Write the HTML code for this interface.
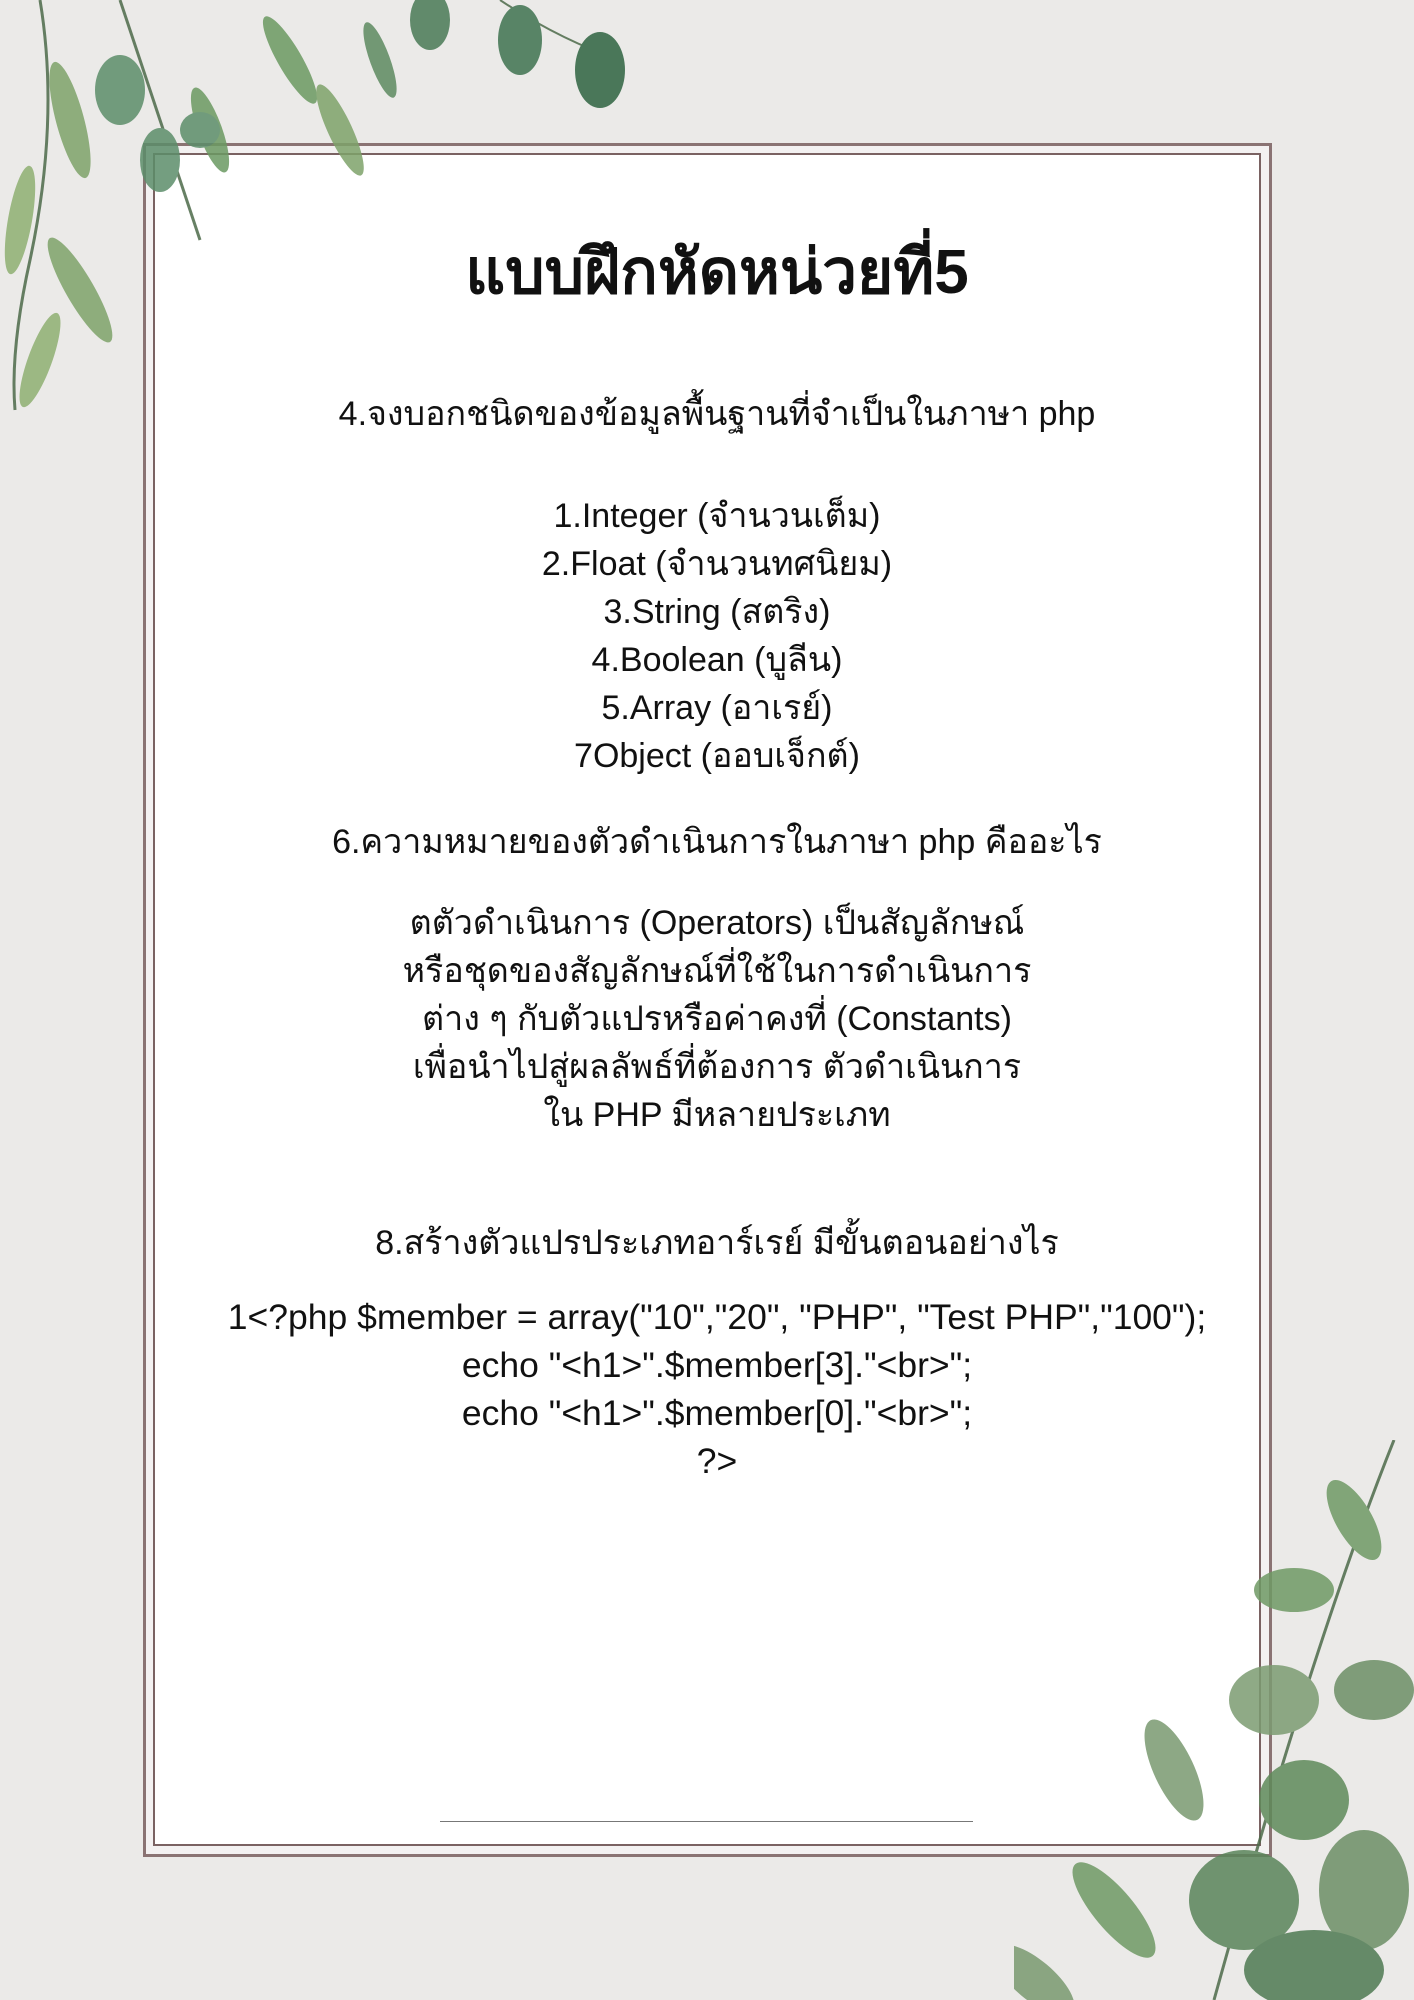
<!DOCTYPE html>
<html><head><meta charset="utf-8"><style>
body{margin:0;width:1414px;height:2000px;background:#ebeae8;position:relative;overflow:hidden;font-family:"Liberation Sans",sans-serif;color:#111}
.frame{position:absolute;left:143px;top:143px;width:1129px;height:1714px;border:3px solid #8a7373;box-sizing:border-box;background:#f3f1f1}
.inner{position:absolute;left:153px;top:153px;width:1108px;height:1693px;border:2px solid #7a6262;box-sizing:border-box;background:#fff}
.t{position:absolute;left:10px;width:1414px;text-align:center;white-space:nowrap}
.l{font-size:34px;line-height:48px}
svg{position:absolute}
</style></head><body>
<div class="frame"></div>
<div class="inner"></div>
<svg width="650" height="430" style="left:0;top:0">
<g fill="#5e8a60" opacity=".85">
<path d="M40 0 Q60 120 30 260 Q10 350 15 410" stroke="#4d6b4a" stroke-width="3" fill="none"/>
<path d="M120 0 Q160 120 200 240" stroke="#4d6b4a" stroke-width="3" fill="none"/>
<path d="M500 0 Q560 40 620 60" stroke="#4d6b4a" stroke-width="2" fill="none"/>
<ellipse cx="70" cy="120" rx="14" ry="60" transform="rotate(-15 70 120)" fill="#7ea36a"/>
<ellipse cx="20" cy="220" rx="12" ry="55" transform="rotate(10 20 220)" fill="#8fb072"/>
<ellipse cx="80" cy="290" rx="14" ry="60" transform="rotate(-30 80 290)" fill="#7ea36a"/>
<ellipse cx="40" cy="360" rx="12" ry="50" transform="rotate(20 40 360)" fill="#8fb072"/>
<ellipse cx="120" cy="90" rx="25" ry="35" fill="#5c8e6a"/>
<ellipse cx="160" cy="160" rx="20" ry="32" fill="#5c8e6a"/>
<ellipse cx="210" cy="130" rx="12" ry="45" transform="rotate(-20 210 130)" fill="#6b9a62"/>
<ellipse cx="290" cy="60" rx="12" ry="50" transform="rotate(-30 290 60)" fill="#6b9a62"/>
<ellipse cx="340" cy="130" rx="12" ry="50" transform="rotate(-25 340 130)" fill="#7ea36a"/>
<ellipse cx="200" cy="130" rx="20" ry="18" fill="#5c8e6a"/>
<ellipse cx="520" cy="40" rx="22" ry="35" fill="#3f7350"/>
<ellipse cx="600" cy="70" rx="25" ry="38" fill="#2f6441"/>
<ellipse cx="430" cy="20" rx="20" ry="30" fill="#4a7a56"/>
<ellipse cx="380" cy="60" rx="10" ry="40" transform="rotate(-20 380 60)" fill="#5e8a60"/>
</g></svg>
<svg width="400" height="560" style="left:1014px;top:1440px">
<g fill="#5f8a5a" opacity=".85">
<path d="M380 0 Q300 200 200 560" stroke="#4d6b4a" stroke-width="3" fill="none"/>
<ellipse cx="340" cy="80" rx="18" ry="45" transform="rotate(-30 340 80)" fill="#6f9a65"/>
<ellipse cx="280" cy="150" rx="40" ry="22" fill="#6f9a65"/>
<ellipse cx="260" cy="260" rx="45" ry="35" fill="#7c9c72"/>
<ellipse cx="360" cy="250" rx="40" ry="30" fill="#6d8f66"/>
<ellipse cx="160" cy="330" rx="20" ry="55" transform="rotate(-25 160 330)" fill="#7a9a70"/>
<ellipse cx="290" cy="360" rx="45" ry="40" fill="#5f8a5a"/>
<ellipse cx="100" cy="470" rx="20" ry="60" transform="rotate(-40 100 470)" fill="#6f9a65"/>
<ellipse cx="230" cy="460" rx="55" ry="50" fill="#5a845a"/>
<ellipse cx="350" cy="450" rx="45" ry="60" fill="#6d8f66"/>
<ellipse cx="20" cy="540" rx="20" ry="50" transform="rotate(-50 20 540)" fill="#7a9a70"/>
<ellipse cx="300" cy="530" rx="70" ry="40" fill="#4e7a52"/>
</g></svg>
<div class="t" style="top:236px;font-size:62px;font-weight:bold;line-height:74px">แบบฝึกหัดหน่วยที่5</div>
<div class="t l" style="top:390px">4.จงบอกชนิดของข้อมูลพื้นฐานที่จำเป็นในภาษา php</div>
<div class="t l" style="top:492px">1.Integer (จำนวนเต็ม)<br>2.Float (จำนวนทศนิยม)<br>3.String (สตริง)<br>4.Boolean (บูลีน)<br>5.Array (อาเรย์)<br>7Object (ออบเจ็กต์)</div>
<div class="t l" style="top:818px">6.ความหมายของตัวดำเนินการในภาษา php คืออะไร</div>
<div class="t l" style="top:899px">ตตัวดำเนินการ (Operators) เป็นสัญลักษณ์<br>หรือชุดของสัญลักษณ์ที่ใช้ในการดำเนินการ<br>ต่าง ๆ กับตัวแปรหรือค่าคงที่ (Constants)<br>เพื่อนำไปสู่ผลลัพธ์ที่ต้องการ ตัวดำเนินการ<br>ใน PHP มีหลายประเภท</div>
<div class="t l" style="top:1219px">8.สร้างตัวแปรประเภทอาร์เรย์ มีขั้นตอนอย่างไร</div>
<div class="t l" style="top:1293px;font-size:35.5px">1&lt;?php $member = array("10","20", "PHP", "Test PHP","100");<br>echo "&lt;h1&gt;".$member[3]."&lt;br&gt;";<br>echo "&lt;h1&gt;".$member[0]."&lt;br&gt;";<br>?&gt;</div>
<div style="position:absolute;left:440px;top:1821px;width:533px;height:1px;background:#777"></div>
</body></html>
